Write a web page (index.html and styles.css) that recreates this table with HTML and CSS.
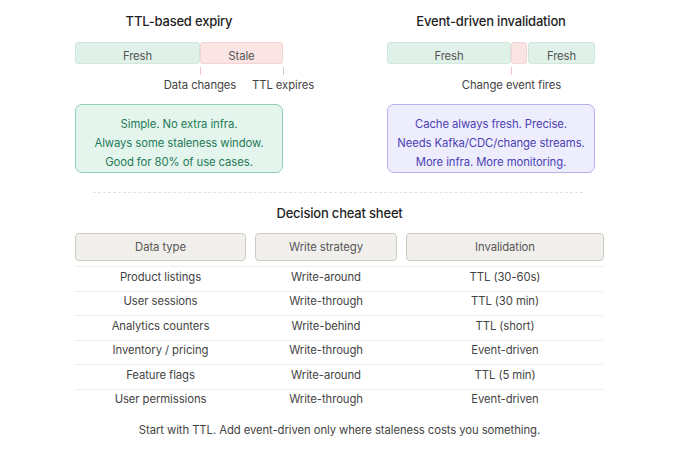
FILE: index.html
```html
<!DOCTYPE html>
<html lang="en">
<head>
<meta charset="utf-8">
<title>Cache invalidation</title>
<link rel="stylesheet" href="styles.css">
</head>
<body>
<div class="page">
  <div class="compare">
    <section class="panel">
      <h2 class="title">TTL-based expiry</h2>
      <div class="bar">
        <div class="seg fresh w-ttl-fresh">Fresh</div>
        <div class="seg stale w-ttl-stale">Stale</div>
      </div>
      <div class="marks">
        <div class="mark at-change"><span class="tick pink"></span><span class="mark-label">Data changes</span></div>
        <div class="mark at-expire"><span class="tick gray"></span><span class="mark-label">TTL expires</span></div>
      </div>
      <div class="note green">
        <div>Simple. No extra infra.</div>
        <div>Always some staleness window.</div>
        <div>Good for 80% of use cases.</div>
      </div>
    </section>
    <section class="panel">
      <h2 class="title">Event-driven invalidation</h2>
      <div class="bar">
        <div class="seg fresh w-ev-fresh1">Fresh</div>
        <div class="seg stale w-ev-gap"></div>
        <div class="seg fresh w-ev-fresh2">Fresh</div>
      </div>
      <div class="marks">
        <div class="mark at-event"><span class="tick pink"></span><span class="mark-label">Change event fires</span></div>
      </div>
      <div class="note purple">
        <div>Cache always fresh. Precise.</div>
        <div>Needs Kafka/CDC/change streams.</div>
        <div>More infra. More monitoring.</div>
      </div>
    </section>
  </div>

  <div class="divider"></div>

  <h2 class="title sheet-title">Decision cheat sheet</h2>

  <div class="table">
    <div class="thead">
      <div class="th">Data type</div>
      <div class="th">Write strategy</div>
      <div class="th">Invalidation</div>
    </div>
    <div class="row"><div>Product listings</div><div>Write-around</div><div>TTL (30-60s)</div></div>
    <div class="row"><div>User sessions</div><div>Write-through</div><div>TTL (30 min)</div></div>
    <div class="row"><div>Analytics counters</div><div>Write-behind</div><div>TTL (short)</div></div>
    <div class="row"><div>Inventory / pricing</div><div>Write-through</div><div>Event-driven</div></div>
    <div class="row"><div>Feature flags</div><div>Write-around</div><div>TTL (5 min)</div></div>
    <div class="row"><div>User permissions</div><div>Write-through</div><div>Event-driven</div></div>
  </div>

  <p class="footer">Start with TTL. Add event-driven only where staleness costs you something.</p>
</div>
</body>
</html>
```

FILE: styles.css
```css
* { box-sizing: border-box; }

html, body {
  margin: 0;
  padding: 0;
  background: #ffffff;
}

body {
  font-family: Inter, "Liberation Sans", Arial, sans-serif;
  font-size: 11.3px;
  letter-spacing: -0.08px;
  color: #444444;
}

.page {
  width: 680px;
  padding: 12px 0 0 75px;
}

.compare {
  display: flex;
  gap: 104px;
}

.panel {
  width: 208px;
  display: flex;
  flex-direction: column;
}

.title {
  margin: 0;
  font-size: 13px;
  letter-spacing: -0.2px;
  line-height: 18px;
  font-weight: 500;
  color: #1f1f1f;
  text-align: center;
}

.bar {
  display: flex;
  margin-top: 11.5px;
  height: 22px;
}

.seg {
  height: 22px;
  border: 1px solid;
  border-radius: 3px;
  padding-top: 7.5px;
  line-height: 13px;
  text-align: center;
  color: #555555;
}

.fresh {
  background: #dff1e8;
  border-color: #d0e8dc;
}

.stale {
  background: #fbe4e4;
  border-color: #f5d3d3;
}

.w-ttl-fresh { width: 125px; }
.w-ttl-stale { width: 83px; }
.w-ev-fresh1 { width: 124px; }
.w-ev-gap { width: 16px; margin-right: 1px; }
.w-ev-fresh2 { width: 67px; }

.marks {
  display: flex;
  height: 28px;
}

.mark {
  width: 0;
  display: flex;
  flex-direction: column;
  align-items: center;
}

.at-change { margin-left: 125px; }
.at-expire { margin-left: 83px; }
.at-event { margin-left: 124.5px; }

.tick {
  display: block;
  width: 1px;
  height: 8px;
  margin-top: 3.5px;
}

.tick.pink { background: #f1c5c5; }
.tick.gray { background: #cccccc; }

.mark-label {
  display: block;
  white-space: nowrap;
  margin-top: 3px;
  line-height: 14px;
  color: #444444;
}

.note {
  margin-top: 12.5px;
  border: 1px solid;
  border-radius: 7px;
  padding: 9.5px 0 0;
  line-height: 19px;
  text-align: center;
}

.note.green {
  background: #e4f5ee;
  border-color: #93cdb3;
  color: #1f7a56;
}

.note.purple {
  background: #eeedfd;
  border-color: #b7b0ec;
  color: #4b3fb3;
}

.divider {
  width: 490px;
  margin: 19px 0 0 18px;
  border-top: 1px dashed #e2e2e2;
}

.sheet-title {
  width: 529px;
  margin-top: 11px;
}

.table {
  width: 529px;
  margin-top: 11px;
}

.thead,
.row {
  display: grid;
  grid-template-columns: 171px 142px 198px;
  column-gap: 9px;
  text-align: center;
}

.th {
  height: 28px;
  border: 1px solid #cfcac1;
  border-radius: 4px;
  background: #f1efeb;
  padding-top: 5px;
  line-height: 16px;
  color: #555555;
}

.thead { margin-bottom: 5.5px; }

.row {
  border-top: 1px solid #efefef;
  padding: 1.5px 0 6px;
  line-height: 16px;
  color: #444444;
}

.footer {
  width: 529px;
  margin: 9.5px 0 0;
  line-height: 14px;
  text-align: center;
  color: #444444;
}
```
